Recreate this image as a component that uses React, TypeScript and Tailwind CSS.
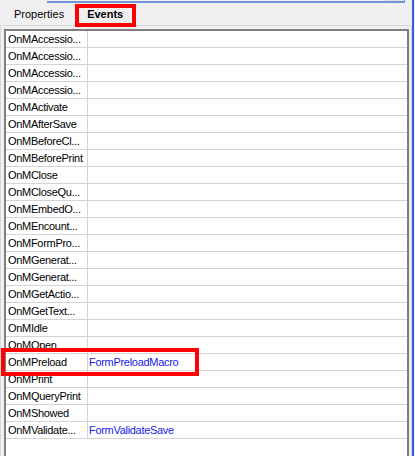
import React from "react";

type Row = { name: string; value?: string };

const rows: Row[] = [
  { name: "OnMAccessio..." },
  { name: "OnMAccessio..." },
  { name: "OnMAccessio..." },
  { name: "OnMAccessio..." },
  { name: "OnMActivate" },
  { name: "OnMAfterSave" },
  { name: "OnMBeforeCl..." },
  { name: "OnMBeforePrint" },
  { name: "OnMClose" },
  { name: "OnMCloseQu..." },
  { name: "OnMEmbedO..." },
  { name: "OnMEncount..." },
  { name: "OnMFormPro..." },
  { name: "OnMGenerat..." },
  { name: "OnMGenerat..." },
  { name: "OnMGetActio..." },
  { name: "OnMGetText..." },
  { name: "OnMIdle" },
  { name: "OnMOpen" },
  { name: "OnMPreload", value: "FormPreloadMacro" },
  { name: "OnMPrint" },
  { name: "OnMQueryPrint" },
  { name: "OnMShowed" },
  { name: "OnMValidate...", value: "FormValidateSave" },
];

export default function App() {
  return (
    <div className="relative flex h-[456px] w-[415px] overflow-hidden bg-[#f0f0f0] font-['Liberation_Sans',Arial,sans-serif] text-[11px] text-black">
      {/* property panel */}
      <div className="flex w-[412px] flex-col">
        {/* bottom edge of the field above */}
        <div className="flex h-[3px]">
          <div className="ml-[47px] flex h-[3px] w-[358px] border-b-2 border-r border-[#6f95d8]">
            <div className="flex-1" />
            <div className="w-[19px] bg-[#e2e2e2]" />
          </div>
        </div>

        {/* tabs */}
        <div className="flex h-[22px] items-center">
          <span className="ml-[14px] leading-none">Properties</span>
          <span className="ml-[23px] font-bold leading-none">Events</span>
        </div>

        {/* tab page */}
        <div className="flex flex-1 flex-col border-l border-r border-t border-[#d9d9d9] pl-[3px] pr-[2px] pt-[3px]">
          <div className="flex-1 border-l-2 border-r-2 border-t-2 border-[#7f7f7f] bg-white tracking-[-0.3px]">
            {rows.map((r, i) => (
              <div key={i} className="flex h-[17px] border-b border-[#d4d4d4] leading-[16px]">
                <div className="w-[82px] overflow-hidden whitespace-nowrap border-r border-[#d4d4d4] pl-[2px]">{r.name}</div>
                <div className="flex-1 whitespace-nowrap pl-[1px] text-[#1a1ae6]">{r.value ?? ""}</div>
              </div>
            ))}
          </div>
        </div>
      </div>

      {/* neighbouring window edge */}
      <div className="w-[2px] bg-[#2f62d2]" />
      <div className="w-[1px] bg-[#e8eaf3]" />

      {/* highlight frames */}
      <div className="pointer-events-none absolute left-[75px] top-[4px] h-[23px] w-[61px] border-4 border-[#ff0000]" />
      <div className="pointer-events-none absolute left-[1px] top-[348px] h-[28px] w-[198px] border-4 border-[#ff0000]" />
    </div>
  );
}
